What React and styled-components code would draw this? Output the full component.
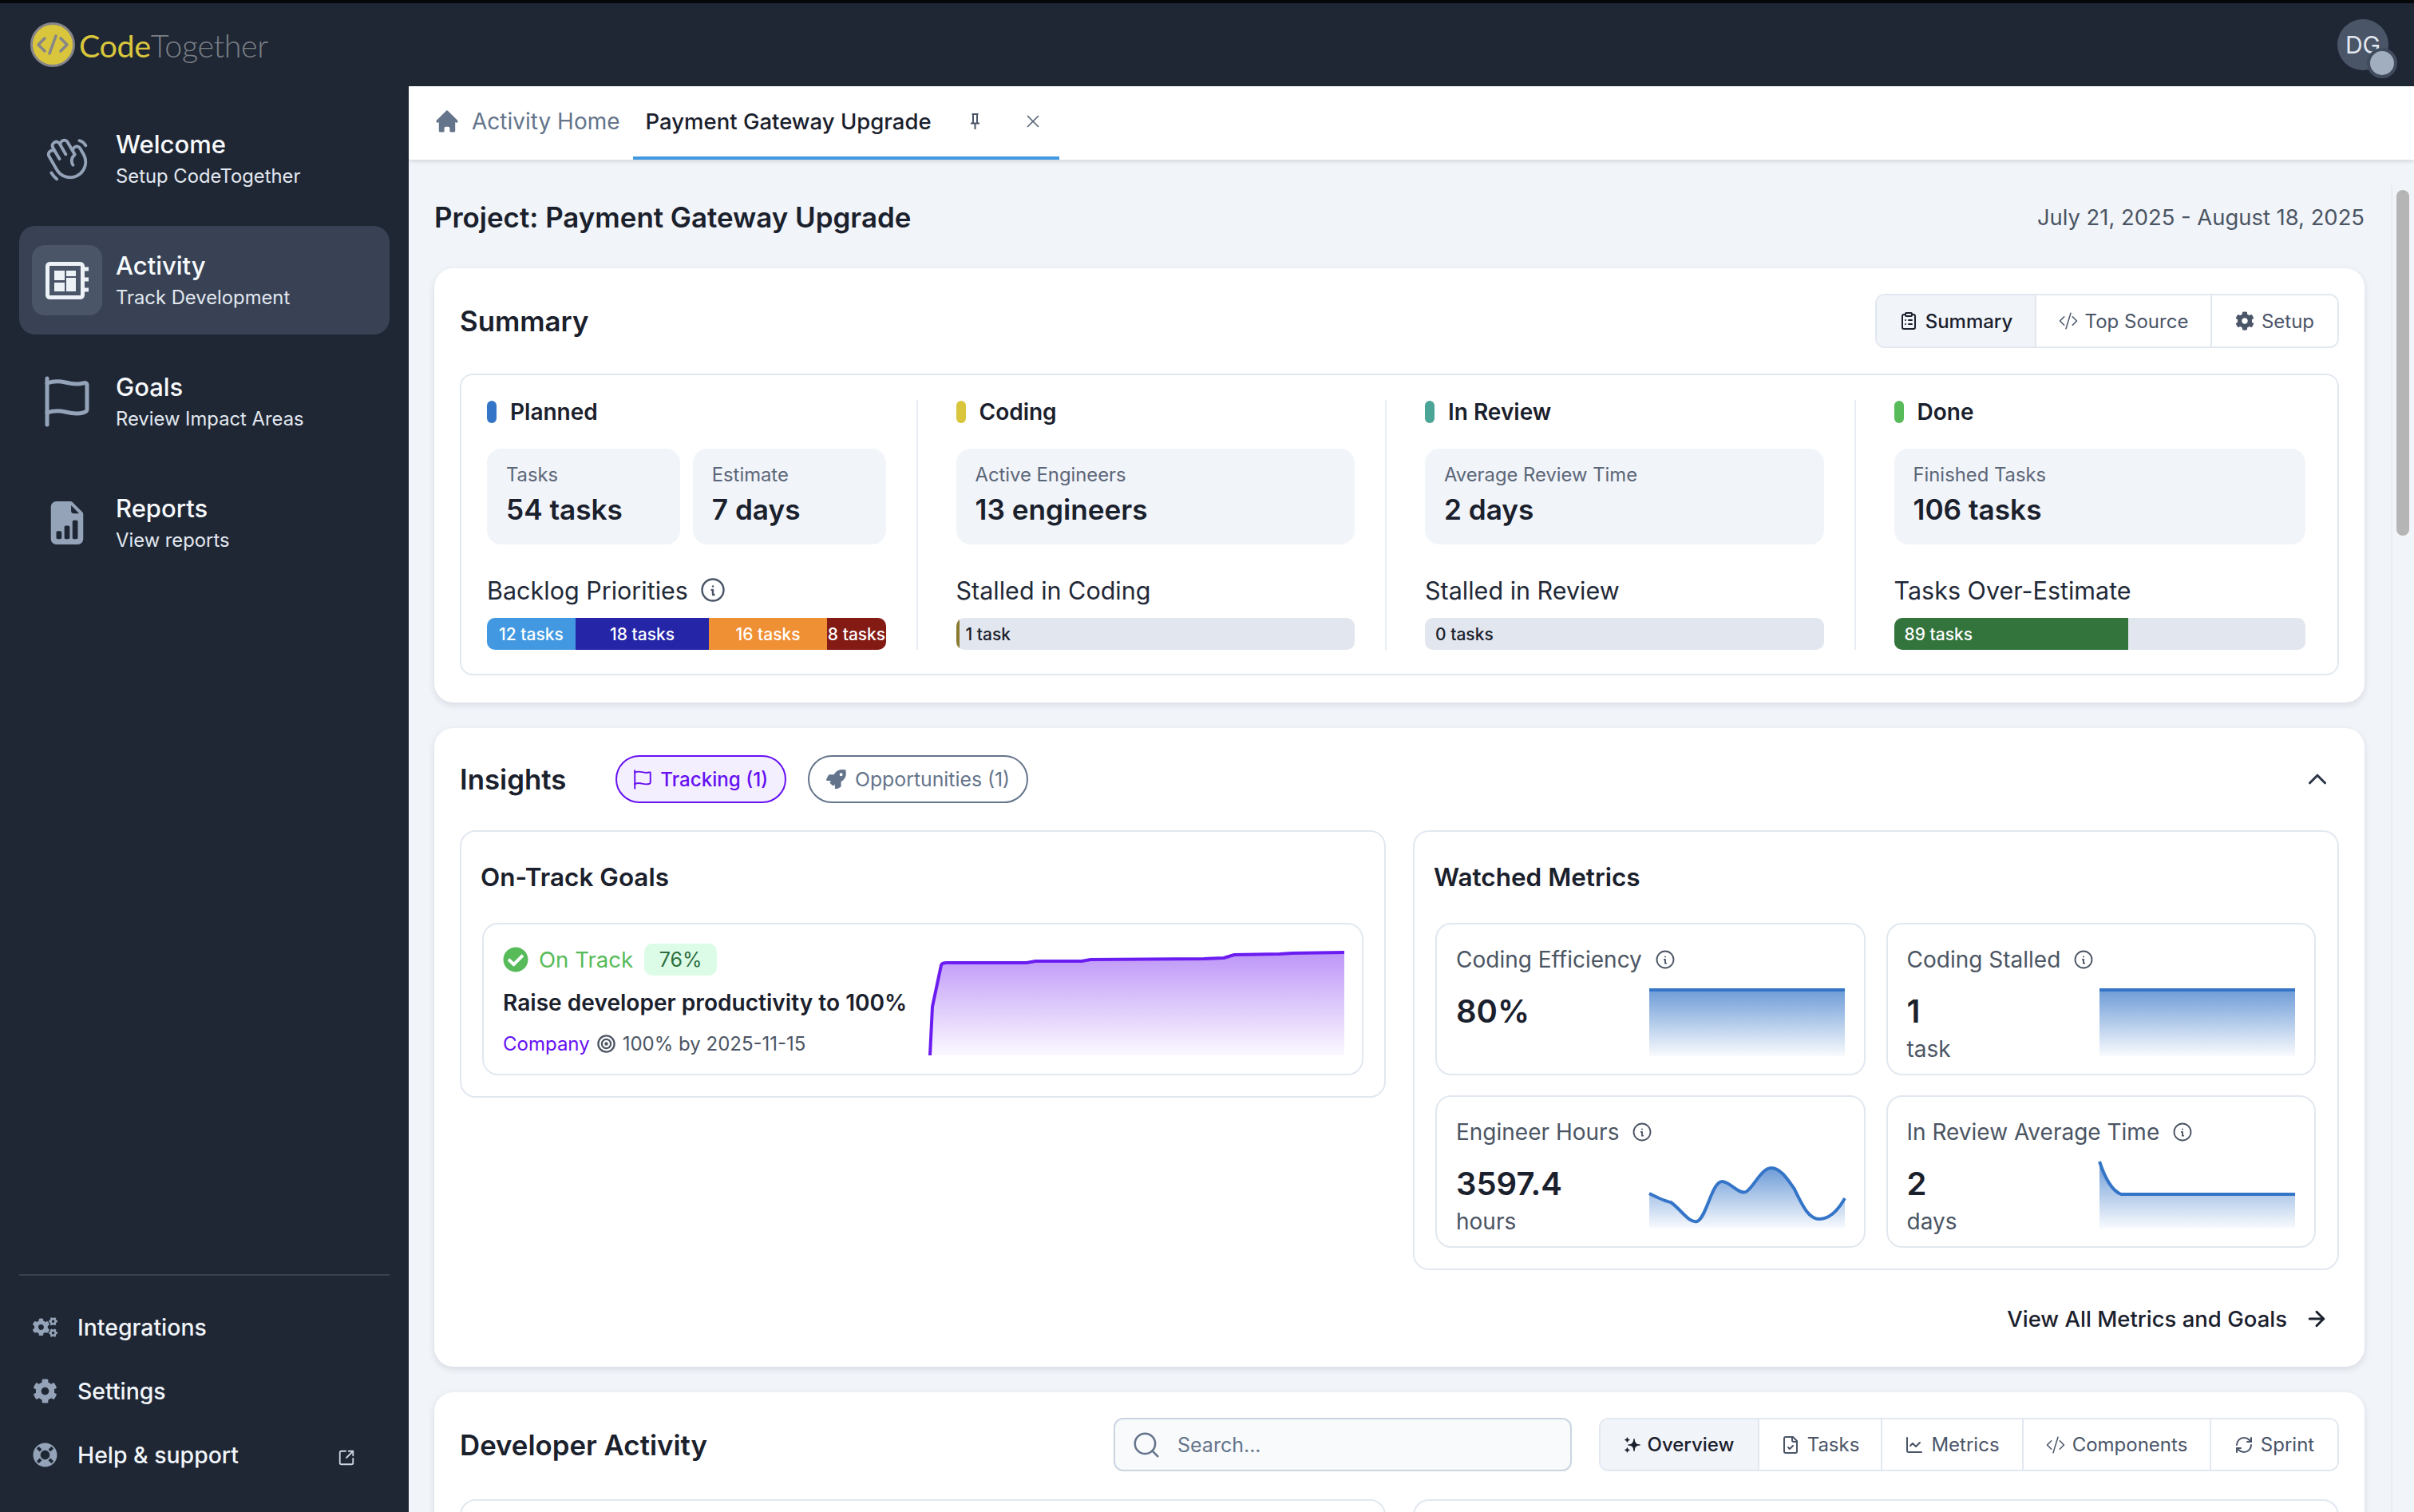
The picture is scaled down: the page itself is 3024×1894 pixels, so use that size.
import styled, { createGlobalStyle } from 'styled-components'
import { FaCog, FaCogs, FaLifeRing, FaRocket, FaCheckCircle } from 'react-icons/fa'
import { BsFileEarmarkBarGraphFill, BsCodeSlash } from 'react-icons/bs'
import { HiHome } from 'react-icons/hi'
import { PiHandWaving } from 'react-icons/pi'
import { TbInfoCircle, TbTarget } from 'react-icons/tb'
import {
    LuClipboardList,
    LuChevronUp,
    LuArrowRight,
    LuSearch,
    LuFileCheck,
    LuChartLine,
    LuRefreshCw,
    LuX,
    LuSquareArrowOutUpRight,
} from 'react-icons/lu'

const GlobalStyle = createGlobalStyle`
    html, body {
        margin: 0;
        padding: 0;
        height: 100%;
        background: #f1f4f9;
        font-family: Inter, "Liberation Sans", sans-serif;
        color: #1a202c;
    }
    * { box-sizing: border-box; }
`

const Shell = styled.div`
    height: 100vh;
    display: flex;
    flex-direction: column;
    overflow: hidden;
`

const TopBar = styled.header`
    height: 108px;
    flex: none;
    border-top: 4px solid #05070a;
    background: #1f2735;
    display: flex;
    align-items: center;
    justify-content: space-between;
    padding: 0 32px 0 38px;
`

const Logo = styled.div`
    display: flex;
    align-items: center;
    gap: 5px;
    font-family: Lato, sans-serif;
    font-size: 39.5px;
    letter-spacing: -0.4px;
`

const LogoCode = styled.span`
    color: #d9c63c;
`

const LogoTogether = styled.span`
    color: #7b7f85;
    font-weight: 300;
`

const Avatar = styled.div`
    position: relative;
    width: 64px;
    height: 64px;
    border-radius: 50%;
    background: #4a5568;
    color: #e2e8f0;
    font-size: 30px;
    display: flex;
    align-items: center;
    justify-content: center;
    &::after {
        content: '';
        position: absolute;
        right: -11px;
        bottom: -10px;
        width: 30px;
        height: 30px;
        border-radius: 50%;
        background: #a0aec0;
        border: 4px solid #414c5e;
    }
`

const Body = styled.div`
    flex: 1;
    min-height: 0;
    display: flex;
`

const Sidebar = styled.aside`
    width: 512px;
    flex: none;
    background: #1f2735;
    padding: 23px 24px 0;
    display: flex;
    flex-direction: column;
`

const NavList = styled.nav`
    display: flex;
    flex-direction: column;
    gap: 16px;
    flex: 1;
`

const NavItem = styled.a`
    height: 136px;
    border-radius: 20px;
    padding: 0 16px;
    display: flex;
    align-items: center;
    gap: 17px;
    background: ${(p) => (p.$active ? '#384254' : 'transparent')};
`

const NavIconBox = styled.span`
    width: 88px;
    height: 88px;
    flex: none;
    border-radius: 16px;
    background: ${(p) => (p.$active ? '#4a5568' : 'transparent')};
    color: ${(p) => (p.$active ? '#edf2f7' : '#94a3b8')};
    display: flex;
    align-items: center;
    justify-content: center;
    font-size: ${(p) => p.$size || 62}px;
`

const NavText = styled.span`
    display: flex;
    flex-direction: column;
    gap: 4px;
`

const NavTitle = styled.span`
    color: #f7fafc;
    font-size: 31px;
    font-weight: 500;
    line-height: 40px;
`

const NavSub = styled.span`
    color: #e2e8f0;
    font-size: 23.8px;
    line-height: 32px;
`

const BottomNav = styled.div`
    border-top: 2px solid #374151;
    padding: 24px 16px 32px;
    display: flex;
    flex-direction: column;
`

const BottomItem = styled.a`
    height: 80px;
    display: flex;
    align-items: center;
    gap: 25px;
    color: #f1f5f9;
    font-size: 28.4px;
    font-weight: 500;
`

const BottomIcon = styled.span`
    width: 32px;
    flex: none;
    color: #94a3b8;
    font-size: 31px;
    display: flex;
    justify-content: center;
`

const ExternalIcon = styled.span`
    margin-left: auto;
    margin-right: 27px;
    margin-top: 8px;
    color: #cbd5e0;
    font-size: 22px;
    display: flex;
`

const Main = styled.main`
    position: relative;
    flex: 1;
    min-width: 0;
    display: flex;
    flex-direction: column;
`

const TabBar = styled.div`
    height: 92px;
    flex: none;
    background: #fff;
    display: flex;
    padding-left: 32px;
    box-shadow: 0 2px 5px rgba(30, 40, 60, 0.14);
    position: relative;
    z-index: 1;
`

const Tab = styled.div`
    height: 92px;
    display: flex;
    align-items: center;
    font-size: ${(p) => (p.$active ? 27.5 : 28)}px;
    font-weight: ${(p) => (p.$active ? 500 : 400)};
    color: ${(p) => (p.$active ? '#1a202c' : '#64748b')};
    border-bottom: 4px solid ${(p) => (p.$active ? '#4299e1' : 'transparent')};
    padding: ${(p) => (p.$active ? '0 0 0 16px' : '0 16px 0 0')};
    width: ${(p) => (p.$active ? '534px' : 'auto')};
`

const HomeIcon = styled.span`
    color: #64748b;
    font-size: 34px;
    display: flex;
    margin-right: 14px;
    margin-left: -1px;
`

const PinButton = styled.span`
    color: #4a5568;
    display: flex;
    margin-left: 48px;
`

const CloseButton = styled.span`
    color: #5b6678;
    font-size: 26px;
    display: flex;
    margin-left: 53px;
`

const Scroller = styled.div`
    flex: 1;
    min-height: 0;
    overflow: hidden;
    padding: 48px 62px 0 32px;
`

const ScrollThumb = styled.div`
    position: absolute;
    top: 124px;
    right: 0;
    bottom: 0;
    width: 29px;
    border-left: 2px solid #e8edf3;
    &::after {
        content: '';
        position: absolute;
        top: 6px;
        left: 5px;
        width: 16px;
        height: 433px;
        border-radius: 8px;
        background: #b5b5b5;
    }
`

const ProjectRow = styled.div`
    height: 48px;
    margin-bottom: 40px;
    display: flex;
    align-items: center;
    justify-content: space-between;
`

const ProjectTitle = styled.h1`
    margin: 0;
    font-size: 34.9px;
    font-weight: 600;
    color: #1a202c;
`

const DateRange = styled.span`
    font-size: 27.4px;
    color: #4b5563;
`

const Card = styled.section`
    background: #fff;
    border-radius: 24px;
    padding: ${(p) => p.$top || 32}px 32px ${(p) => p.$bottom || 34}px;
    margin-bottom: 32px;
    box-shadow: 0 3px 8px rgba(30, 40, 60, 0.12);
`

const CardHeader = styled.div`
    height: ${(p) => p.$height || 68}px;
    display: flex;
    align-items: center;
    justify-content: space-between;
    margin-bottom: ${(p) => p.$gap || 32}px;
`

const CardTitle = styled.h2`
    margin: 0;
    font-size: 34.8px;
    font-weight: 600;
    color: #1a202c;
`

const Segments = styled.div`
    display: flex;
    height: ${(p) => p.$height || 68}px;
    border: 2px solid #e2e8f0;
    border-radius: 12px;
    overflow: hidden;
    margin-left: ${(p) => (p.$push ? '34px' : '0')};
`

const Segment = styled.div`
    width: ${(p) => p.$width}px;
    display: flex;
    align-items: center;
    justify-content: center;
    gap: 9px;
    font-size: 24px;
    font-weight: ${(p) => (p.$active ? 500 : 400)};
    color: ${(p) => (p.$active ? '#1a202c' : '#4a5568')};
    background: ${(p) => (p.$active ? '#f1f4f9' : '#fff')};
    & + & {
        border-left: 2px solid #e2e8f0;
    }
    svg {
        font-size: 24px;
        flex: none;
    }
`

const SummaryBox = styled.div`
    height: 378px;
    border: 2px solid #e2e8f0;
    border-radius: 16px;
    padding: 31px 40px 30px 32px;
    display: flex;
`

const Column = styled.div`
    flex: ${(p) => (p.$last ? '1' : 'none')};
    width: ${(p) => (p.$last ? 'auto' : '539.5px')};
    margin-right: ${(p) => (p.$last ? 0 : 48)}px;
    padding-right: ${(p) => (p.$last ? 0 : 38)}px;
    border-right: ${(p) => (p.$last ? 'none' : '2px solid #e8edf3')};
`

const StageHeading = styled.div`
    height: 30px;
    display: flex;
    align-items: center;
    gap: 17px;
    font-size: 28px;
    font-weight: 600;
    color: #1a202c;
    margin-bottom: 31px;
    &::before {
        content: '';
        width: 12px;
        height: 28px;
        border-radius: 6px;
        background: ${(p) => p.$color};
    }
`

const StatRow = styled.div`
    display: flex;
    gap: 16px;
`

const StatBox = styled.div`
    flex: 1;
    height: 120px;
    padding: 18px 24px 0;
    background: #f1f4f9;
    border-radius: 18px;
`

const StatLabel = styled.div`
    font-size: 23.8px;
    line-height: 30px;
    color: #5b6678;
`

const StatValue = styled.div`
    font-size: 35.2px;
    line-height: 46px;
    font-weight: 600;
    color: #1a202c;
    margin-top: 5px;
`

const BarLabel = styled.div`
    height: 40px;
    margin: 37px 0 15px;
    display: flex;
    align-items: center;
    gap: 13px;
    font-size: 30.5px;
    color: #1f2937;
    svg {
        font-size: 36px;
        stroke-width: 1.6;
        color: #4a5568;
    }
`

const Bar = styled.div`
    height: 40px;
    border-radius: 10px;
    overflow: hidden;
    display: flex;
    background: #e2e6ee;
`

const BarSegment = styled.div`
    width: ${(p) => p.$width}px;
    flex: none;
    background: ${(p) => p.$color};
    color: #fff;
    font-size: 21px;
    font-weight: 500;
    display: flex;
    align-items: center;
    justify-content: center;
    white-space: nowrap;
`

const BarFill = styled.div`
    background: ${(p) => p.$color};
    color: #fff;
    font-size: 21px;
    font-weight: 500;
    padding-left: 13px;
    display: flex;
    align-items: center;
`

const BarNote = styled.div`
    color: #1a202c;
    font-size: 21px;
    font-weight: 500;
    padding-left: ${(p) => p.$inset}px;
    display: flex;
    align-items: center;
    white-space: nowrap;
    border-left: ${(p) => (p.$tick ? `4px solid ${p.$tick}` : 'none')};
`

const InsightChips = styled.div`
    display: flex;
    align-items: center;
    gap: 27px;
    margin-left: 62px;
    flex: 1;
`

const Chip = styled.div`
    height: 60px;
    padding: 0 21px 0 21px;
    border-radius: 30px;
    display: flex;
    align-items: center;
    gap: 11px;
    font-size: ${(p) => (p.$active ? 24.2 : 24.8)}px;
    font-weight: ${(p) => (p.$active ? 500 : 400)};
    border: 2px solid ${(p) => (p.$active ? '#6610f2' : '#64748b')};
    color: ${(p) => (p.$active ? '#6610f2' : '#64748b')};
    background: ${(p) => (p.$active ? '#f3effe' : '#fff')};
`

const Collapse = styled.span`
    color: #2d3748;
    font-size: 38px;
    display: flex;
    margin-right: 8px;
`

const TwoColumns = styled.div`
    display: grid;
    grid-template-columns: 1fr 1fr;
    gap: 34px;
    align-items: start;
`

const SubBox = styled.div`
    border: 2px solid #e2e8f0;
    border-radius: 20px;
    padding: 35px ${(p) => p.$right || 26}px 26px 26px;
`

const SubTitle = styled.h3`
    margin: 0 0 35px -2px;
    font-size: 31.5px;
    line-height: 44px;
    font-weight: 600;
    color: #1a202c;
`

const GoalCard = styled.div`
    height: 191px;
    border: 2px solid #e2e8f0;
    border-radius: 20px;
    padding: 24px 22px 22px 24px;
    display: flex;
    justify-content: space-between;
`

const GoalText = styled.div`
    display: flex;
    flex-direction: column;
`

const GoalStatus = styled.div`
    height: 40px;
    display: flex;
    align-items: center;
    font-size: 27.6px;
    color: #57bb5a;
    svg {
        font-size: 32px;
        margin-right: 13px;
    }
`

const GoalBadge = styled.span`
    margin-left: 14px;
    height: 40px;
    width: 91px;
    border-radius: 10px;
    background: #dcfce7;
    color: #2f6f3f;
    font-size: 25px;
    display: flex;
    align-items: center;
    justify-content: center;
`

const GoalName = styled.div`
    margin-top: 16px;
    line-height: 36px;
    font-size: 28.1px;
    font-weight: 600;
    color: #1a202c;
    white-space: nowrap;
`

const GoalMeta = styled.div`
    margin-top: 17px;
    height: 32px;
    display: flex;
    align-items: center;
    gap: 7px;
    font-size: 24px;
    color: #4b5563;
    svg {
        font-size: 27px;
    }
`

const GoalOwner = styled.span`
    color: #6610f2;
`

const GoalChart = styled.svg`
    width: 519px;
    height: 131px;
    flex: none;
    align-self: flex-end;
    overflow: visible;
    margin-bottom: 1px;
`

const MetricGrid = styled.div`
    display: grid;
    grid-template-columns: 1fr 1fr;
    gap: 25px 26px;
`

const MetricCard = styled.div`
    height: 191px;
    border: 2px solid #e2e8f0;
    border-radius: 20px;
    padding: 27px 24px 0;
`

const MetricLabel = styled.div`
    height: 34px;
    display: flex;
    align-items: center;
    gap: 15px;
    font-size: 28px;
    color: #4b5563;
    svg {
        font-size: 28px;
        stroke-width: 1.6;
    }
`

const MetricRow = styled.div`
    margin-top: 20px;
    display: flex;
    justify-content: space-between;
`

const MetricValues = styled.div`
    display: flex;
    flex-direction: column;
    padding-top: 2px;
`

const MetricValue = styled.div`
    font-size: 40px;
    line-height: 52px;
    font-weight: 600;
    color: #1a202c;
`

const MetricUnit = styled.div`
    font-size: 28px;
    line-height: 32px;
    margin-top: 5px;
    color: #4b5563;
`

const Spark = styled.svg`
    width: 245px;
    height: 84px;
    flex: none;
    overflow: visible;
`

const LinkRow = styled.div`
    height: 40px;
    margin-top: 41px;
    padding-right: 13px;
    display: flex;
    align-items: center;
    justify-content: flex-end;
    gap: 22px;
    font-size: 27.5px;
    font-weight: 500;
    color: #1a202c;
    svg {
        font-size: 30px;
        stroke-width: 2.4;
    }
`

const SearchBox = styled.div`
    width: 574px;
    height: 67px;
    margin-left: auto;
    border: 2px solid #cbd5e0;
    border-radius: 12px;
    background: #f8fafc;
    padding: 0 20px;
    display: flex;
    align-items: center;
    gap: 20px;
    color: #64748b;
    font-size: 25px;
    svg {
        font-size: 38px;
        flex: none;
        stroke-width: 1.6;
    }
`

const EmptyBox = styled.div`
    height: 220px;
    border: 2px solid #e2e8f0;
    border-radius: 20px;
`

const InfoDot = () => <TbInfoCircle />

const FlagIcon = ({ width = 56, height = 64 }) => (
    <svg width={width} height={height} viewBox="0 0 56 64" fill="none" stroke="currentColor" strokeWidth="5" strokeLinecap="round" strokeLinejoin="round">
        <path d="M3 3v58" />
        <path d="M3 9c8-3 15-3 23-1s15 3 22 1c4-1 5 0 5 2v31c0 2-1 3-5 4-7 2-14 1-22-1s-15-2-23 1" />
    </svg>
)

const ActivityIcon = () => (
    <svg width="54" height="47" viewBox="0 0 54 47" fill="none">
        <rect x="2.5" y="2.5" width="44" height="42" rx="3" stroke="currentColor" strokeWidth="5" />
        <rect x="11" y="11" width="13" height="12" fill="currentColor" />
        <rect x="26" y="11" width="12" height="7" fill="currentColor" />
        <rect x="26" y="20" width="12" height="17" fill="currentColor" />
        <rect x="11" y="26" width="13" height="11" fill="currentColor" />
        <path d="M48 9h6M48 22h6M48 35h6" stroke="currentColor" strokeWidth="5" />
    </svg>
)

const PinIcon = () => (
    <svg width="13" height="20" viewBox="0 0 13 20" fill="none" stroke="currentColor" strokeWidth="2">
        <path d="M2.5 1h8M4 1v11M9 1v11M1 12.5h11M6.5 13v7" />
    </svg>
)

const star = (x, y, r) =>
    `M${x} ${y - r}Q${x} ${y} ${x + r} ${y}Q${x} ${y} ${x} ${y + r}Q${x} ${y} ${x - r} ${y}Q${x} ${y} ${x} ${y - r}Z`

const StarsIcon = () => (
    <svg width="20" height="20" viewBox="0 0 20 20" fill="currentColor" stroke="currentColor" strokeWidth="1.2" strokeLinejoin="round">
        <path d={star(12, 10, 7.4)} />
        <path d={star(3.4, 3.6, 2.6)} />
        <path d={star(3.4, 16.4, 2.6)} />
    </svg>
)

const CodeMark = () => (
    <svg width="56" height="56" viewBox="0 0 56 56" fill="none">
        <circle cx="28" cy="28" r="26.5" fill="#d9c63c" stroke="#85858a" strokeWidth="3" />
        <path d="M18 20l-8 8 8 8M38 20l8 8-8 8M32 17l-8 22" stroke="#85858a" strokeWidth="3.5" strokeLinecap="round" strokeLinejoin="round" />
    </svg>
)

const Gradient = ({ id, color, top, bottom }) => (
    <defs>
        <linearGradient id={id} x1="0" y1="0" x2="0" y2="1">
            <stop offset="0%" stopColor={color} stopOpacity={top} />
            <stop offset="100%" stopColor={color} stopOpacity={bottom} />
        </linearGradient>
    </defs>
)

const goalLine = 'M0 131 L3 70 L14 18 Q15 15 21 15 L121 15 L132 13 L190 13 L201 11 L343 10 L368 9 L381 5 L438 4 L454 3 L519 2'

const sparks = {
    flat: { line: 'M0 1 L245 1', depth: 84 },
    hours: {
        line: 'M0 40 C12 46 20 50 27 51 C40 60 50 78 60 75 C72 70 78 26 91 25 C100 24 112 42 121 38 C130 34 140 8 153 8 C165 8 175 25 181 33 C190 50 198 72 213 72 C226 72 236 62 245 46',
        depth: 84,
    },
    review: { line: 'M0 0 C6 18 14 36 27 41 L245 41', depth: 84 },
}

const Sparkline = ({ id, kind }) => {
    const { line, depth } = sparks[kind]
    return (
        <Spark viewBox={`0 0 245 ${depth}`}>
            <Gradient id={id} color="#3575c8" top="0.72" bottom="0.03" />
            <path d={`${line} L245 ${depth} L0 ${depth} Z`} fill={`url(#${id})`} />
            <path d={line} fill="none" stroke="#3575c8" strokeWidth="4" />
        </Spark>
    )
}

const metrics = [
    { label: 'Coding Efficiency', value: '80%', kind: 'flat' },
    { label: 'Coding Stalled', value: '1', unit: 'task', kind: 'flat' },
    { label: 'Engineer Hours', value: '3597.4', unit: 'hours', kind: 'hours' },
    { label: 'In Review Average Time', value: '2', unit: 'days', kind: 'review' },
]

const App = () => {
    return (
        <Shell>
            <GlobalStyle />
            <TopBar>
                <Logo>
                    <CodeMark />
                    <span>
                        <LogoCode>Code</LogoCode>
                        <LogoTogether>Together</LogoTogether>
                    </span>
                </Logo>
                <Avatar>DG</Avatar>
            </TopBar>
            <Body>
                <Sidebar>
                    <NavList>
                        <NavItem>
                            <NavIconBox><PiHandWaving /></NavIconBox>
                            <NavText>
                                <NavTitle>Welcome</NavTitle>
                                <NavSub>Setup CodeTogether</NavSub>
                            </NavText>
                        </NavItem>
                        <NavItem $active>
                            <NavIconBox $active><ActivityIcon /></NavIconBox>
                            <NavText>
                                <NavTitle>Activity</NavTitle>
                                <NavSub>Track Development</NavSub>
                            </NavText>
                        </NavItem>
                        <NavItem>
                            <NavIconBox><FlagIcon /></NavIconBox>
                            <NavText>
                                <NavTitle>Goals</NavTitle>
                                <NavSub>Review Impact Areas</NavSub>
                            </NavText>
                        </NavItem>
                        <NavItem>
                            <NavIconBox $size={54}><BsFileEarmarkBarGraphFill /></NavIconBox>
                            <NavText>
                                <NavTitle>Reports</NavTitle>
                                <NavSub>View reports</NavSub>
                            </NavText>
                        </NavItem>
                    </NavList>
                    <BottomNav>
                        <BottomItem>
                            <BottomIcon><FaCogs /></BottomIcon>
                            Integrations
                        </BottomItem>
                        <BottomItem>
                            <BottomIcon><FaCog /></BottomIcon>
                            Settings
                        </BottomItem>
                        <BottomItem>
                            <BottomIcon><FaLifeRing /></BottomIcon>
                            Help &amp; support
                            <ExternalIcon><LuSquareArrowOutUpRight /></ExternalIcon>
                        </BottomItem>
                    </BottomNav>
                </Sidebar>
                <Main>
                    <TabBar>
                        <Tab>
                            <HomeIcon><HiHome /></HomeIcon>
                            Activity Home
                        </Tab>
                        <Tab $active>
                            Payment Gateway Upgrade
                            <PinButton><PinIcon /></PinButton>
                            <CloseButton><LuX strokeWidth={1.6} /></CloseButton>
                        </Tab>
                    </TabBar>
                    <Scroller>
                        <ProjectRow>
                            <ProjectTitle>Project: Payment Gateway Upgrade</ProjectTitle>
                            <DateRange>July 21, 2025 - August 18, 2025</DateRange>
                        </ProjectRow>

                        <Card>
                            <CardHeader>
                                <CardTitle>Summary</CardTitle>
                                <Segments>
                                    <Segment $width={198} $active><LuClipboardList />Summary</Segment>
                                    <Segment $width={220}><BsCodeSlash />Top Source</Segment>
                                    <Segment $width={159}><FaCog />Setup</Segment>
                                </Segments>
                            </CardHeader>
                            <SummaryBox>
                                <Column>
                                    <StageHeading $color="#3575c8">Planned</StageHeading>
                                    <StatRow>
                                        <StatBox>
                                            <StatLabel>Tasks</StatLabel>
                                            <StatValue>54 tasks</StatValue>
                                        </StatBox>
                                        <StatBox>
                                            <StatLabel>Estimate</StatLabel>
                                            <StatValue>7 days</StatValue>
                                        </StatBox>
                                    </StatRow>
                                    <BarLabel>Backlog Priorities <InfoDot /></BarLabel>
                                    <Bar>
                                        <BarSegment $width={111} $color="#4299e1">12 tasks</BarSegment>
                                        <BarSegment $width={167} $color="#2525a8">18 tasks</BarSegment>
                                        <BarSegment $width={148} $color="#f09035">16 tasks</BarSegment>
                                        <BarSegment $width={74} $color="#841a14">8 tasks</BarSegment>
                                    </Bar>
                                </Column>
                                <Column>
                                    <StageHeading $color="#d9c63c">Coding</StageHeading>
                                    <StatRow>
                                        <StatBox>
                                            <StatLabel>Active Engineers</StatLabel>
                                            <StatValue>13 engineers</StatValue>
                                        </StatBox>
                                    </StatRow>
                                    <BarLabel>Stalled in Coding</BarLabel>
                                    <Bar>
                                        <BarNote $inset={8} $tick="#8a7a30">1 task</BarNote>
                                    </Bar>
                                </Column>
                                <Column>
                                    <StageHeading $color="#4aa596">In Review</StageHeading>
                                    <StatRow>
                                        <StatBox>
                                            <StatLabel>Average Review Time</StatLabel>
                                            <StatValue>2 days</StatValue>
                                        </StatBox>
                                    </StatRow>
                                    <BarLabel>Stalled in Review</BarLabel>
                                    <Bar>
                                        <BarNote $inset={13}>0 tasks</BarNote>
                                    </Bar>
                                </Column>
                                <Column $last>
                                    <StageHeading $color="#57bb5a">Done</StageHeading>
                                    <StatRow>
                                        <StatBox>
                                            <StatLabel>Finished Tasks</StatLabel>
                                            <StatValue>106 tasks</StatValue>
                                        </StatBox>
                                    </StatRow>
                                    <BarLabel>Tasks Over-Estimate</BarLabel>
                                    <Bar>
                                        <BarFill $color="#33733c" style={{ width: '57%' }}>89 tasks</BarFill>
                                    </Bar>
                                </Column>
                            </SummaryBox>
                        </Card>

                        <Card $top={34} $bottom={40}>
                            <CardHeader $height={60} $gap={34}>
                                <CardTitle>Insights</CardTitle>
                                <InsightChips>
                                    <Chip $active><FlagIcon width={22} height={25} />Tracking (1)</Chip>
                                    <Chip><FaRocket />Opportunities (1)</Chip>
                                </InsightChips>
                                <Collapse><LuChevronUp /></Collapse>
                            </CardHeader>
                            <TwoColumns>
                                <SubBox>
                                    <SubTitle>On-Track Goals</SubTitle>
                                    <GoalCard>
                                        <GoalText>
                                            <GoalStatus>
                                                <FaCheckCircle />
                                                On Track
                                                <GoalBadge>76%</GoalBadge>
                                            </GoalStatus>
                                            <GoalName>Raise developer productivity to 100%</GoalName>
                                            <GoalMeta>
                                                <GoalOwner>Company</GoalOwner>
                                                <TbTarget />
                                                100% by 2025-11-15
                                            </GoalMeta>
                                        </GoalText>
                                        <GoalChart viewBox="0 0 519 131">
                                            <Gradient id="goalFill" color="#7c2df0" top="0.5" bottom="0.03" />
                                            <path d={`${goalLine} L519 131 Z`} fill="url(#goalFill)" />
                                            <path d={goalLine} fill="none" stroke="#6b1cf0" strokeWidth="4" />
                                        </GoalChart>
                                    </GoalCard>
                                </SubBox>
                                <SubBox $right={27}>
                                    <SubTitle>Watched Metrics</SubTitle>
                                    <MetricGrid>
                                        {metrics.map((metric, index) => (
                                            <MetricCard key={index}>
                                                <MetricLabel>{metric.label} <InfoDot /></MetricLabel>
                                                <MetricRow>
                                                    <MetricValues>
                                                        <MetricValue>{metric.value}</MetricValue>
                                                        {metric.unit && <MetricUnit>{metric.unit}</MetricUnit>}
                                                    </MetricValues>
                                                    <Sparkline id={`spark${index}`} kind={metric.kind} />
                                                </MetricRow>
                                            </MetricCard>
                                        ))}
                                    </MetricGrid>
                                </SubBox>
                            </TwoColumns>
                            <LinkRow>View All Metrics and Goals <LuArrowRight /></LinkRow>
                        </Card>

                        <Card>
                            <CardHeader $height={67} $gap={35}>
                                <CardTitle>Developer Activity</CardTitle>
                                <SearchBox><LuSearch />Search...</SearchBox>
                                <Segments $height={67} $push>
                                    <Segment $width={197} $active><StarsIcon />Overview</Segment>
                                    <Segment $width={154}><LuFileCheck />Tasks</Segment>
                                    <Segment $width={177}><LuChartLine />Metrics</Segment>
                                    <Segment $width={235}><BsCodeSlash />Components</Segment>
                                    <Segment $width={160}><LuRefreshCw />Sprint</Segment>
                                </Segments>
                            </CardHeader>
                            <TwoColumns>
                                <EmptyBox />
                                <EmptyBox />
                            </TwoColumns>
                        </Card>
                    </Scroller>
                    <ScrollThumb />
                </Main>
            </Body>
        </Shell>
    )
}

export default App
